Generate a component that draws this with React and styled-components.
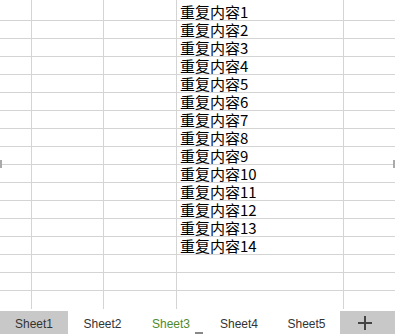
import React from "react";
import styled, { createGlobalStyle } from "styled-components";

const Global = createGlobalStyle`
  html, body { margin: 0; padding: 0; background: #fff; overflow: hidden; }
  #root { width: 395px; height: 334px; }
`;

const Page = styled.div`
  position: relative;
  width: 395px;
  height: 334px;
  display: flex;
  flex-direction: column;
  background: #fff;
`;

const Grid = styled.div`
  display: grid;
  grid-template-columns: 32px 72px 73px 167px 1fr;
  grid-template-rows: 21px repeat(15, 18px) 18px;
`;

const Cell = styled.div`
  box-sizing: border-box;
  border-right: ${(p) => (p.$last ? "none" : "1px solid #d4d4d4")};
  border-bottom: ${(p) => (p.$noBottom ? "none" : "1px solid #d4d4d4")};
  display: flex;
  align-items: flex-end;
  padding: 0 0 0 3px;
  font-family: "Noto Sans CJK SC", sans-serif;
  font-size: 15px;
  line-height: 17px;
  color: #000;
  white-space: nowrap;
  overflow: hidden;
`;

const TabBar = styled.div`
  position: relative;
  flex: 1;
  display: flex;
  align-items: flex-end;
`;

const Tab = styled.div`
  box-sizing: border-box;
  width: ${(p) => p.$w}px;
  height: 23px;
  display: flex;
  align-items: center;
  justify-content: center;
  padding-top: 2px;
  background: ${(p) => (p.$active ? "#c8c8c8" : "transparent")};
  color: ${(p) => (p.$current ? "#4f8a2b" : "#333")};
  font-family: "Liberation Sans", Arial, sans-serif;
  font-size: 12px;
`;

const AddButton = styled.div`
  flex: 1;
  height: 23px;
  background: #c8c8c8;
  display: flex;
  align-items: center;
  justify-content: center;
  padding-right: 6px;
`;

const Cursor = styled.div`
  position: absolute;
  left: 195px;
  bottom: 0;
  width: 8px;
  height: 2px;
  background: #888;
`;

const EdgeMark = styled.div`
  position: absolute;
  top: 160px;
  ${(p) => (p.$right ? "right: 0;" : "left: 0;")}
  width: 2px;
  height: 8px;
  background: #aaa;
`;

const ROWS = 17;
const COLS = 5;

export default function App() {
  const cells = [];
  for (let r = 0; r < ROWS; r++) {
    for (let c = 0; c < COLS; c++) {
      const text = c === 3 && r < 14 ? `重复内容${r + 1}` : "";
      cells.push(
        <Cell key={`${r}-${c}`} $last={c === COLS - 1} $noBottom={r === ROWS - 1}>
          {text}
        </Cell>
      );
    }
  }
  const tabs = [
    { name: "Sheet1", w: 68, active: true },
    { name: "Sheet2", w: 69 },
    { name: "Sheet3", w: 68, current: true },
    { name: "Sheet4", w: 68 },
    { name: "Sheet5", w: 67 },
  ];
  return (
    <Page>
      <Global />
      <Grid>{cells}</Grid>
      <TabBar>
        {tabs.map((t) => (
          <Tab key={t.name} $w={t.w} $active={t.active} $current={t.current}>
            {t.name}
          </Tab>
        ))}
        <AddButton>
          <svg width="14" height="14" viewBox="0 0 14 14">
            <path d="M7 0V14M0 7H14" stroke="#444" strokeWidth="2" />
          </svg>
        </AddButton>
        <Cursor />
      </TabBar>
      <EdgeMark />
      <EdgeMark $right />
    </Page>
  );
}
